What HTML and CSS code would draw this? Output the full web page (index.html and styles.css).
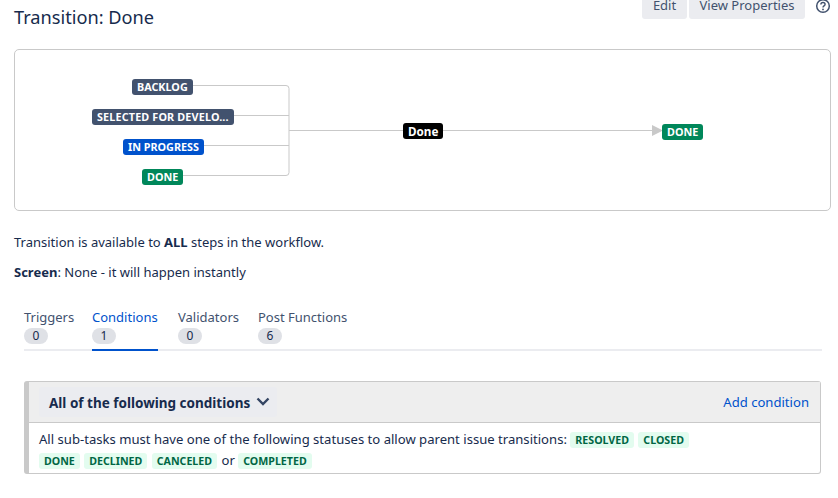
FILE: index.html
```html
<!DOCTYPE html>
<html lang="en">
<head>
    <meta charset="UTF-8">
    <title>Transition: Done</title>
    <link rel="stylesheet" href="styles.css">
</head>
<body>
    <div class="page">
        <header class="page-header">
            <h1>Transition: Done</h1>
            <div class="actions">
                <button class="btn btn-edit">Edit</button>
                <button class="btn">View Properties</button>
                <svg class="help" width="16" height="16" viewBox="0 0 16 16">
                    <circle cx="8" cy="8" r="6.3" fill="none" stroke="#42526e" stroke-width="1.5"/>
                    <path d="M5.9 6.4c0-1.2 1-1.9 2.1-1.9s2.1.7 2.1 1.8c0 1.6-2.1 1.6-2.1 3.1" fill="none" stroke="#42526e" stroke-width="1.4"/>
                    <circle cx="8" cy="11.4" r=".9" fill="#42526e"/>
                </svg>
            </div>
        </header>

        <div class="diagram">
            <svg class="lines" width="816" height="161" viewBox="0 0 816 161">
                <path d="M178 35.5H271a3 3 0 0 1 3 3V122.500a3 3 0 0 1-3 3H168M219 65.500H274M188 95.500H274M274 80.500H640" fill="none" stroke="#c9c9c9"/>
                <path d="M637 75l11 5.500-11 5.500z" fill="#c9c9c9"/>
            </svg>
            <span class="lozenge dark node-backlog">BACKLOG</span>
            <span class="lozenge dark node-selected">SELECTED FOR DEVELO...</span>
            <span class="lozenge blue node-progress">IN PROGRESS</span>
            <span class="lozenge green node-done">DONE</span>
            <span class="transition-name">Done</span>
            <span class="lozenge green node-target">DONE</span>
        </div>

        <p class="info">Transition is available to <b>ALL</b> steps in the workflow.</p>
        <p class="info"><b>Screen</b>: None - it will happen instantly</p>

        <nav class="tabs">
            <a class="tab">Triggers<span class="count">0</span></a>
            <a class="tab active">Conditions<span class="count">1</span></a>
            <a class="tab">Validators<span class="count">0</span></a>
            <a class="tab">Post Functions<span class="count">6</span></a>
        </nav>

        <section class="panel">
            <div class="panel-head">
                <button class="group-btn">All of the following conditions
                    <svg class="chevron" width="14" height="9" viewBox="0 0 14 9"><path d="M1.500 1.500L7 7l5.500-5.500" fill="none" stroke="#344563" stroke-width="2.4"/></svg>
                </button>
                <a class="add-link">Add condition</a>
            </div>
            <div class="panel-body">
                All sub-tasks must have one of the following statuses to allow parent issue transitions:
                <span class="tag">RESOLVED</span> <span class="tag">CLOSED</span><br>
                <span class="tag">DONE</span> <span class="tag">DECLINED</span> <span class="tag">CANCELED</span> or <span class="tag">COMPLETED</span>
            </div>
        </section>
    </div>
</body>
</html>
```

FILE: styles.css
```css
html, body {
    margin: 0;
    padding: 0;
    height: 498px;
    overflow: hidden;
    background: #fff;
}

body {
    font-family: "Noto Sans", "Open Sans", sans-serif;
    font-size: 13px;
    color: #172b4d;
}

.page {
    padding: 0 7px 0 14px;
}

.page-header {
    display: flex;
    justify-content: space-between;
    align-items: flex-start;
    height: 49px;
}

h1 {
    margin: 4px 0 0;
    font-size: 18.2px;
    line-height: 26px;
    font-weight: 400;
    color: #172b4d;
}

.actions {
    display: flex;
    align-items: flex-start;
    margin-top: -11px;
}

.btn {
    height: 30px;
    padding: 2px 10.5px 0;
    margin-right: 2px;
    border: none;
    border-radius: 3px;
    background: #ebecf0;
    color: #42526e;
    font: inherit;
}

.btn-edit {
    width: 45px;
    padding: 2px 0 0;
}

.help {
    margin: 9px 0 0 8px;
}

.diagram {
    position: relative;
    width: 815px;
    height: 160px;
    border: 1px solid #c9c9c9;
    border-radius: 5px;
    box-sizing: content-box;
}

.lines {
    position: absolute;
    top: 0;
    left: 0;
}

.lozenge {
    position: absolute;
    height: 16px;
    line-height: 16px;
    padding: 0 5px;
    border-radius: 3px;
    color: #fff;
    font-size: 10.8px;
    font-weight: 700;
    white-space: nowrap;
}

.dark { background: #42526e; }
.blue { background: #0052cc; }
.green { background: #00875a; }

.node-backlog { left: 117px; top: 29px; }
.node-selected { left: 77px; top: 59px; letter-spacing: 0.15px; }
.node-progress { left: 108px; top: 89px; }
.node-done { left: 127px; top: 119px; }
.node-target { left: 647px; top: 74px; }

.transition-name {
    position: absolute;
    left: 388px;
    top: 73px;
    height: 16px;
    line-height: 16px;
    padding: 0 5px;
    border-radius: 3px;
    background: #000;
    color: #fff;
    font-size: 11.7px;
    font-weight: 700;
}

.info {
    margin: 0;
    padding-top: 12px;
    height: 18px;
    line-height: 18px;
}

.diagram + .info {
    margin-top: 10px;
}

.info + .info {
    margin-top: 0;
}

.info b {
    font-weight: 700;
}

.tabs {
    display: grid;
    grid-template-columns: 48px 66px 60px 89px;
    gap: 20px;
    margin: 23px 9px 0 10px;
    border-bottom: 2px solid #ebecf0;
    height: 47px;
    box-sizing: border-box;
    padding-top: 4px;
}

.tab {
    display: block;
    height: 41px;
    color: #42526e;
    line-height: 18px;
    white-space: nowrap;
}

.tab.active {
    color: #0052cc;
    border-bottom: 2px solid #0052cc;
}

.count {
    display: block;
    width: 24px;
    height: 16px;
    margin-top: 2px;
    border-radius: 8px;
    background: #dfe1e6;
    color: #172b4d;
    font-size: 12px;
    line-height: 16px;
    text-align: center;
}

.panel {
    margin: 30px 10px 0 10px;
    border: 1px solid #c9c9c9;
    border-left: 5px solid #c9c9c9;
    border-radius: 3px;
}

.panel-head {
    display: flex;
    justify-content: space-between;
    align-items: center;
    height: 40px;
    padding: 0 11px 0 10px;
    background: #eee;
    border-bottom: 1px solid #c9c9c9;
}

.group-btn {
    display: flex;
    align-items: center;
    gap: 6px;
    height: 30px;
    padding: 2px 7px 0 10px;
    border: none;
    border-radius: 3px;
    background: #ebecf0;
    color: #172b4d;
    font: inherit;
    font-size: 13.5px;
    font-weight: 700;
}

.chevron {
    margin-bottom: 4px;
}

.add-link {
    color: #0052cc;
    font-size: 13.1px;
}

.panel-body {
    padding: 6px 10px 2px;
    font-size: 13.1px;
    line-height: 21px;
}

.tag {
    display: inline-block;
    height: 16px;
    line-height: 16px;
    padding: 0 5px;
    margin-right: 1px;
    border-radius: 3px;
    background: #e3fcef;
    color: #006644;
    font-size: 10.65px;
    font-weight: 700;
}
```
